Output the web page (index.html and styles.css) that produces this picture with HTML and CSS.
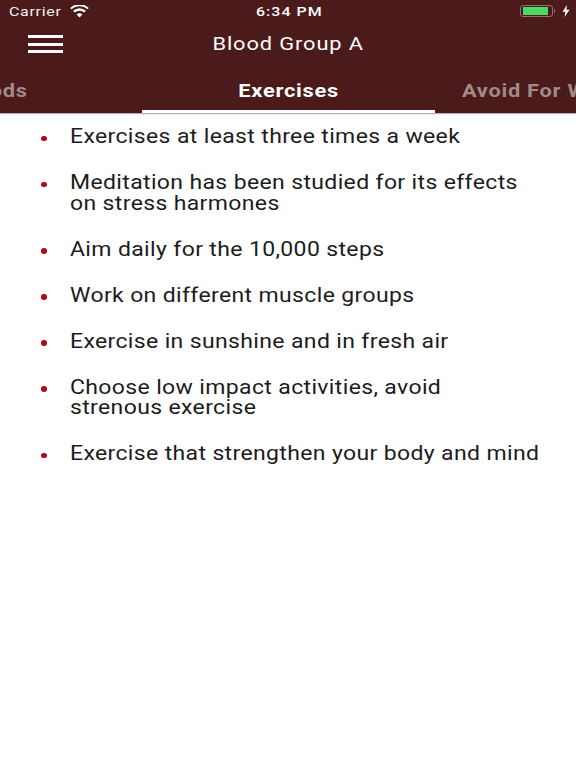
FILE: index.html
```html
<!DOCTYPE html>
<html lang="en">
<head>
<meta charset="utf-8">
<title>Blood Group A</title>
<link rel="stylesheet" href="styles.css">
</head>
<body>
<header class="header">
  <div class="status">
    <div class="status-left">
      <span class="wide wide-left carrier">Carrier</span>
      <svg class="wifi" viewBox="0 0 20 14" width="19" height="13"><path d="M10 13.5 L6.9 10.2 A4.6 4.6 0 0 1 13.1 10.2 Z M4.9 8.2 L3.1 6.3 A10 10 0 0 1 16.9 6.3 L15.1 8.2 A7.4 7.4 0 0 0 4.9 8.2 Z M1.5 4.7 L0 3.1 A14.6 14.6 0 0 1 20 3.1 L18.5 4.7 A12.4 12.4 0 0 0 1.5 4.7 Z" fill="#fff"/></svg>
    </div>
    <span class="wide time">6:34 PM</span>
    <div class="status-right">
      <span class="battery"><span class="battery-fill"></span></span>
      <span class="battery-tip"></span>
      <svg class="bolt" viewBox="0 0 8 12" width="8" height="12"><path d="M5 0 L0.5 6.8 H3.4 L2.6 12 L7.5 4.8 H4.4 Z" fill="#fff"/></svg>
    </div>
  </div>
  <div class="nav">
    <button class="menu" aria-label="Menu"><span></span><span></span><span></span></button>
    <h1 class="wide title">Blood Group A</h1>
  </div>
  <nav class="tabs">
    <span class="tab tab-left"><span class="wide wide-right">Foods</span></span>
    <span class="tab tab-active"><span class="wide">Exercises</span></span>
    <span class="tab tab-right"><span class="wide wide-left">Avoid For Weight</span></span>
  </nav>
</header>
<ul class="list">
  <li><span class="item">Exercises at least three times a week</span></li>
  <li><span class="item">Meditation has been studied for its effects on stress harmones</span></li>
  <li><span class="item">Aim daily for the 10,000 steps</span></li>
  <li><span class="item">Work on different muscle groups</span></li>
  <li><span class="item">Exercise in sunshine and in fresh air</span></li>
  <li><span class="item">Choose low impact activities, avoid<br>strenous exercise</span></li>
  <li><span class="item">Exercise that strengthen your body and mind</span></li>
</ul>
</body>
</html>
```
FILE: styles.css
```css
* { box-sizing: border-box; }
html, body { margin: 0; padding: 0; }
body { width: 576px; height: 768px; overflow: hidden; background: #fff; font-family: Roboto, "Liberation Sans", sans-serif; }
.wide { display: inline-block; transform: scaleX(1.18); }
.wide-left { transform-origin: left center; }
.wide-right { transform-origin: right center; }
.header { background: #4b1a1a; height: 113px; color: #fff; display: flex; flex-direction: column; box-shadow: 0 1px 1px rgba(0, 0, 0, .3); }
.status { height: 22px; padding: 0 6px 0 9px; display: grid; grid-template-columns: 1fr auto 1fr; align-items: center; font-size: 13.5px; letter-spacing: .6px; }
.status-left { display: flex; align-items: center; gap: 16px; color: #eee; }
.wifi { display: block; }
.time { font-weight: 500; letter-spacing: .9px; }
.status-right { display: flex; align-items: center; justify-content: flex-end; }
.battery { width: 33px; height: 12px; border: 1px solid #8f6f6f; border-radius: 3px; padding: 1px 2px; display: block; }
.battery-fill { display: block; width: 25px; height: 8px; background: #4cd964; }
.battery-tip { width: 1.5px; height: 4px; background: #8f6f6f; margin: 0 7px 0 1px; }
.bolt { display: block; }
.nav { height: 44px; position: relative; display: flex; align-items: center; justify-content: center; }
.menu { position: absolute; left: 28px; top: 13px; width: 35px; height: 18px; padding: 0; border: 0; background: none; display: flex; flex-direction: column; justify-content: space-between; }
.menu span { display: block; height: 3px; background: #fff; }
.title { margin: 0; font-size: 18.5px; font-weight: 400; letter-spacing: .75px; }
.tabs { position: relative; flex: 1; overflow: hidden; }
.tab { position: absolute; top: 0; height: 47px; line-height: 50px; font-size: 18.5px; font-weight: 700; letter-spacing: .6px; color: #a08a8a; white-space: nowrap; }
.tab-left { right: 548px; }
.tab-active { left: 142px; width: 293px; text-align: center; color: #fff; border-bottom: 3px solid #fff; }
.tab-right { left: 462px; }
.list { margin: 0; padding: 1.1px 0 0 70px; list-style: none; color: #1c1c1c; font-size: 19.5px; line-height: 20.5px; letter-spacing: .3px; }
.list li { position: relative; padding: 13px 0 12.5px; }
.list li::before { content: ""; position: absolute; left: -29px; top: 21.5px; width: 5.5px; height: 5.5px; border-radius: 50%; background: #b00a1e; }
.item { display: block; width: 403px; transform: scaleX(1.18); transform-origin: left center; }
```
